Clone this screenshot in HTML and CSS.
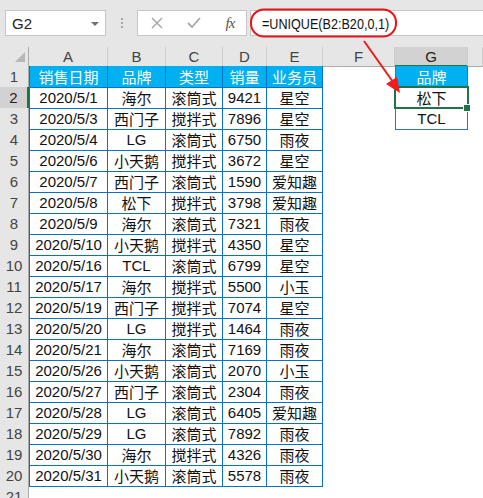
FILE: index.html
```html
<!DOCTYPE html>
<html>
<head>
<meta charset="utf-8">
<link rel="stylesheet" href="styles.css">
</head>
<body>
<div class="app">
  <div class="fbar">
    <div class="namebox"><span>G2</span><span class="caret"></span></div>
    <div class="grip"><i></i><i></i><i></i></div>
    <div class="fxbox">
      <span class="btn"><svg width="14" height="14" viewBox="0 0 14 14"><path d="M2 2L12 12M12 2L2 12" stroke="#a9a9a9" stroke-width="1.5" fill="none"/></svg></span>
      <span class="btn"><svg width="16" height="14" viewBox="0 0 16 14"><path d="M2 7L6 11L14 2" stroke="#a9a9a9" stroke-width="1.8" fill="none"/></svg></span>
      <span class="btn fx">fx</span>
    </div>
    <div class="input"><span class="formula">=UNIQUE(B2:B20,0,1)</span></div>
  </div>

  <div class="sheet">
    <div class="row hdr">
      <div class="corner"><svg width="29" height="19" viewBox="0 0 29 19"><polygon points="25,5 25,15 15,15" fill="#b7b7b7"/></svg></div>
      <div class="ch">A</div><div class="ch">B</div><div class="ch">C</div><div class="ch">D</div><div class="ch">E</div><div class="ch">F</div><div class="ch on">G</div><div class="ch"></div>
    </div>
    <div class="row">
      <div class="rh">1</div>
      <div class="c t a th">销售日期</div><div class="c t th">品牌</div><div class="c t th">类型</div><div class="c t th">销量</div><div class="c t th">业务员</div>
      <div class="c"></div><div class="c g th">品牌</div><div class="c"></div>
    </div>
    <div class="row">
      <div class="rh on">2</div>
      <div class="c t a">2020/5/1</div><div class="c t">海尔</div><div class="c t">滚筒式</div><div class="c t">9421</div><div class="c t">星空</div>
      <div class="c"></div><div class="c g sel">松下</div><div class="c"></div>
    </div>
    <div class="row">
      <div class="rh">3</div>
      <div class="c t a">2020/5/3</div><div class="c t">西门子</div><div class="c t">搅拌式</div><div class="c t">7896</div><div class="c t">星空</div>
      <div class="c"></div><div class="c g last">TCL</div><div class="c"></div>
    </div>
    <div class="row">
      <div class="rh">4</div>
      <div class="c t a">2020/5/4</div><div class="c t">LG</div><div class="c t">滚筒式</div><div class="c t">6750</div><div class="c t">雨夜</div>
      <div class="c"></div><div class="c"></div><div class="c"></div>
    </div>
    <div class="row">
      <div class="rh">5</div>
      <div class="c t a">2020/5/6</div><div class="c t">小天鹅</div><div class="c t">搅拌式</div><div class="c t">3672</div><div class="c t">星空</div>
      <div class="c"></div><div class="c"></div><div class="c"></div>
    </div>
    <div class="row">
      <div class="rh">6</div>
      <div class="c t a">2020/5/7</div><div class="c t">西门子</div><div class="c t">滚筒式</div><div class="c t">1590</div><div class="c t">爱知趣</div>
      <div class="c"></div><div class="c"></div><div class="c"></div>
    </div>
    <div class="row">
      <div class="rh">7</div>
      <div class="c t a">2020/5/8</div><div class="c t">松下</div><div class="c t">搅拌式</div><div class="c t">3798</div><div class="c t">爱知趣</div>
      <div class="c"></div><div class="c"></div><div class="c"></div>
    </div>
    <div class="row">
      <div class="rh">8</div>
      <div class="c t a">2020/5/9</div><div class="c t">海尔</div><div class="c t">滚筒式</div><div class="c t">7321</div><div class="c t">雨夜</div>
      <div class="c"></div><div class="c"></div><div class="c"></div>
    </div>
    <div class="row">
      <div class="rh">9</div>
      <div class="c t a">2020/5/10</div><div class="c t">小天鹅</div><div class="c t">搅拌式</div><div class="c t">4350</div><div class="c t">星空</div>
      <div class="c"></div><div class="c"></div><div class="c"></div>
    </div>
    <div class="row">
      <div class="rh">10</div>
      <div class="c t a">2020/5/16</div><div class="c t">TCL</div><div class="c t">滚筒式</div><div class="c t">6799</div><div class="c t">星空</div>
      <div class="c"></div><div class="c"></div><div class="c"></div>
    </div>
    <div class="row">
      <div class="rh">11</div>
      <div class="c t a">2020/5/17</div><div class="c t">海尔</div><div class="c t">搅拌式</div><div class="c t">5500</div><div class="c t">小玉</div>
      <div class="c"></div><div class="c"></div><div class="c"></div>
    </div>
    <div class="row">
      <div class="rh">12</div>
      <div class="c t a">2020/5/19</div><div class="c t">西门子</div><div class="c t">搅拌式</div><div class="c t">7074</div><div class="c t">星空</div>
      <div class="c"></div><div class="c"></div><div class="c"></div>
    </div>
    <div class="row">
      <div class="rh">13</div>
      <div class="c t a">2020/5/20</div><div class="c t">LG</div><div class="c t">搅拌式</div><div class="c t">1464</div><div class="c t">雨夜</div>
      <div class="c"></div><div class="c"></div><div class="c"></div>
    </div>
    <div class="row">
      <div class="rh">14</div>
      <div class="c t a">2020/5/21</div><div class="c t">海尔</div><div class="c t">滚筒式</div><div class="c t">7169</div><div class="c t">雨夜</div>
      <div class="c"></div><div class="c"></div><div class="c"></div>
    </div>
    <div class="row">
      <div class="rh">15</div>
      <div class="c t a">2020/5/26</div><div class="c t">小天鹅</div><div class="c t">滚筒式</div><div class="c t">2070</div><div class="c t">小玉</div>
      <div class="c"></div><div class="c"></div><div class="c"></div>
    </div>
    <div class="row">
      <div class="rh">16</div>
      <div class="c t a">2020/5/27</div><div class="c t">西门子</div><div class="c t">滚筒式</div><div class="c t">2304</div><div class="c t">雨夜</div>
      <div class="c"></div><div class="c"></div><div class="c"></div>
    </div>
    <div class="row">
      <div class="rh">17</div>
      <div class="c t a">2020/5/28</div><div class="c t">LG</div><div class="c t">滚筒式</div><div class="c t">6405</div><div class="c t">爱知趣</div>
      <div class="c"></div><div class="c"></div><div class="c"></div>
    </div>
    <div class="row">
      <div class="rh">18</div>
      <div class="c t a">2020/5/29</div><div class="c t">LG</div><div class="c t">滚筒式</div><div class="c t">7892</div><div class="c t">雨夜</div>
      <div class="c"></div><div class="c"></div><div class="c"></div>
    </div>
    <div class="row">
      <div class="rh">19</div>
      <div class="c t a">2020/5/30</div><div class="c t">海尔</div><div class="c t">搅拌式</div><div class="c t">4326</div><div class="c t">雨夜</div>
      <div class="c"></div><div class="c"></div><div class="c"></div>
    </div>
    <div class="row">
      <div class="rh">20</div>
      <div class="c t a">2020/5/31</div><div class="c t">小天鹅</div><div class="c t">滚筒式</div><div class="c t">5578</div><div class="c t">雨夜</div>
      <div class="c"></div><div class="c"></div><div class="c"></div>
    </div>
    <div class="row">
      <div class="rh">21</div>
      <div class="c"></div><div class="c"></div><div class="c"></div><div class="c"></div><div class="c"></div>
      <div class="c"></div><div class="c"></div><div class="c"></div>
    </div>
  </div>

  <svg class="annot" width="483" height="498" viewBox="0 0 483 498">
    <rect x="251" y="9.5" width="145" height="27" rx="13" ry="13" fill="none" stroke="#e8141c" stroke-width="2"/>
    <line x1="364" y1="41" x2="393" y2="82" stroke="#f21a1a" stroke-width="2"/>
    <polygon points="400,93 386,84 397,77" fill="#f21a1a"/>
  </svg>
</div>
</body>
</html>
```

FILE: styles.css
```css
* { box-sizing: border-box; }
body {
  margin: 0;
  font-family: "Liberation Sans", "Noto Sans CJK SC", sans-serif;
  background: #fff;
}
.app {
  position: relative;
  width: 483px;
  height: 498px;
  overflow: hidden;
  background: #fff;
}
.fbar {
  height: 47px;
  background: #e6e6e6;
  display: flex;
  align-items: flex-start;
  padding-top: 10px;
}
.namebox {
  margin-left: 5px;
  width: 101px;
  height: 26px;
  background: #fff;
  border: 1px solid #c6c6c6;
  display: flex;
  align-items: center;
  justify-content: space-between;
  padding: 0 6px 0 6px;
  font-size: 15px;
  color: #222;
}
.caret {
  width: 0;
  height: 0;
  border-left: 4px solid transparent;
  border-right: 4px solid transparent;
  border-top: 4px solid #707070;
  margin-top: 1px;
}
.grip {
  width: 31px;
  height: 26px;
  display: flex;
  flex-direction: column;
  align-items: center;
  justify-content: center;
  gap: 2px;
}
.grip i {
  display: block;
  width: 2px;
  height: 2px;
  background: #a8a8a8;
}
.fxbox {
  width: 110px;
  height: 26px;
  background: #fff;
  border: 1px solid #c6c6c6;
  display: grid;
  grid-template-columns: 37px 37px 36px;
  align-items: center;
}
.btn {
  display: flex;
  align-items: center;
  justify-content: center;
  height: 24px;
}
.fx {
  font-family: "Liberation Serif", serif;
  font-style: italic;
  font-size: 15px;
  color: #555;
  letter-spacing: -1px;
}
.input {
  margin-left: 3px;
  flex: 1;
  height: 26px;
  margin-right: -3px;
  background: #fff;
  border: 1px solid #c6c6c6;
  display: flex;
  align-items: center;
  padding-left: 11px;
}
.formula {
  display: inline-block;
  font-size: 15px;
  color: #111;
  white-space: nowrap;
  transform: scaleX(0.84);
  transform-origin: left center;
}
.row {
  display: grid;
  grid-template-columns: 29px 79px 58px 57px 44px 56px 72px 73px 15px;
  height: 21px;
}
.row.hdr { height: 19px; }
.corner {
  background: #e6e6e6;
  border-right: 1px solid #ababab;
  border-bottom: 1px solid #ababab;
}
.corner svg { display: block; }
.ch {
  background: #e6e6e6;
  border-right: 1px solid #cdcdcd;
  border-bottom: 1px solid #ababab;
  display: flex;
  align-items: center;
  justify-content: center;
  font-size: 15px;
  color: #444;
}
.ch.on {
  background: #d2d2d2;
  border-bottom: 2px solid #217346;
  color: #222;
}
.rh {
  background: #e6e6e6;
  border-right: 1px solid #ababab;
  border-bottom: 1px solid #d4d4d4;
  display: flex;
  align-items: center;
  justify-content: center;
  font-size: 15px;
  color: #444;
}
.rh.on {
  background: #d2d2d2;
  border-right: 2px solid #217346;
  color: #222;
}
.c {
  display: flex;
  align-items: center;
  justify-content: center;
  font-size: 15px;
  color: #111;
  white-space: nowrap;
  overflow: visible;
}
.t {
  border-right: 1px solid #0a72c4;
  border-bottom: 1px solid #0a72c4;
}
.t.a { border-left: 1px solid #0a72c4; }
.th {
  background: #00b0f0;
  color: #fff;
}
.g {
  border-left: 1px solid #3a6fc4;
  border-right: 1px solid #3a6fc4;
  border-bottom: 1px solid #3a6fc4;
}
.sel { position: relative; }
.sel::after {
  content: "";
  position: absolute;
  left: -2px;
  top: -1px;
  right: -2px;
  bottom: -1px;
  border: 2px solid #217346;
}
.sel::before {
  content: "";
  position: absolute;
  right: -4px;
  bottom: -4px;
  width: 6px;
  height: 6px;
  background: #217346;
  border: 1px solid #fff;
  z-index: 2;
}
.annot {
  position: absolute;
  left: 0;
  top: 0;
  pointer-events: none;
}
```
